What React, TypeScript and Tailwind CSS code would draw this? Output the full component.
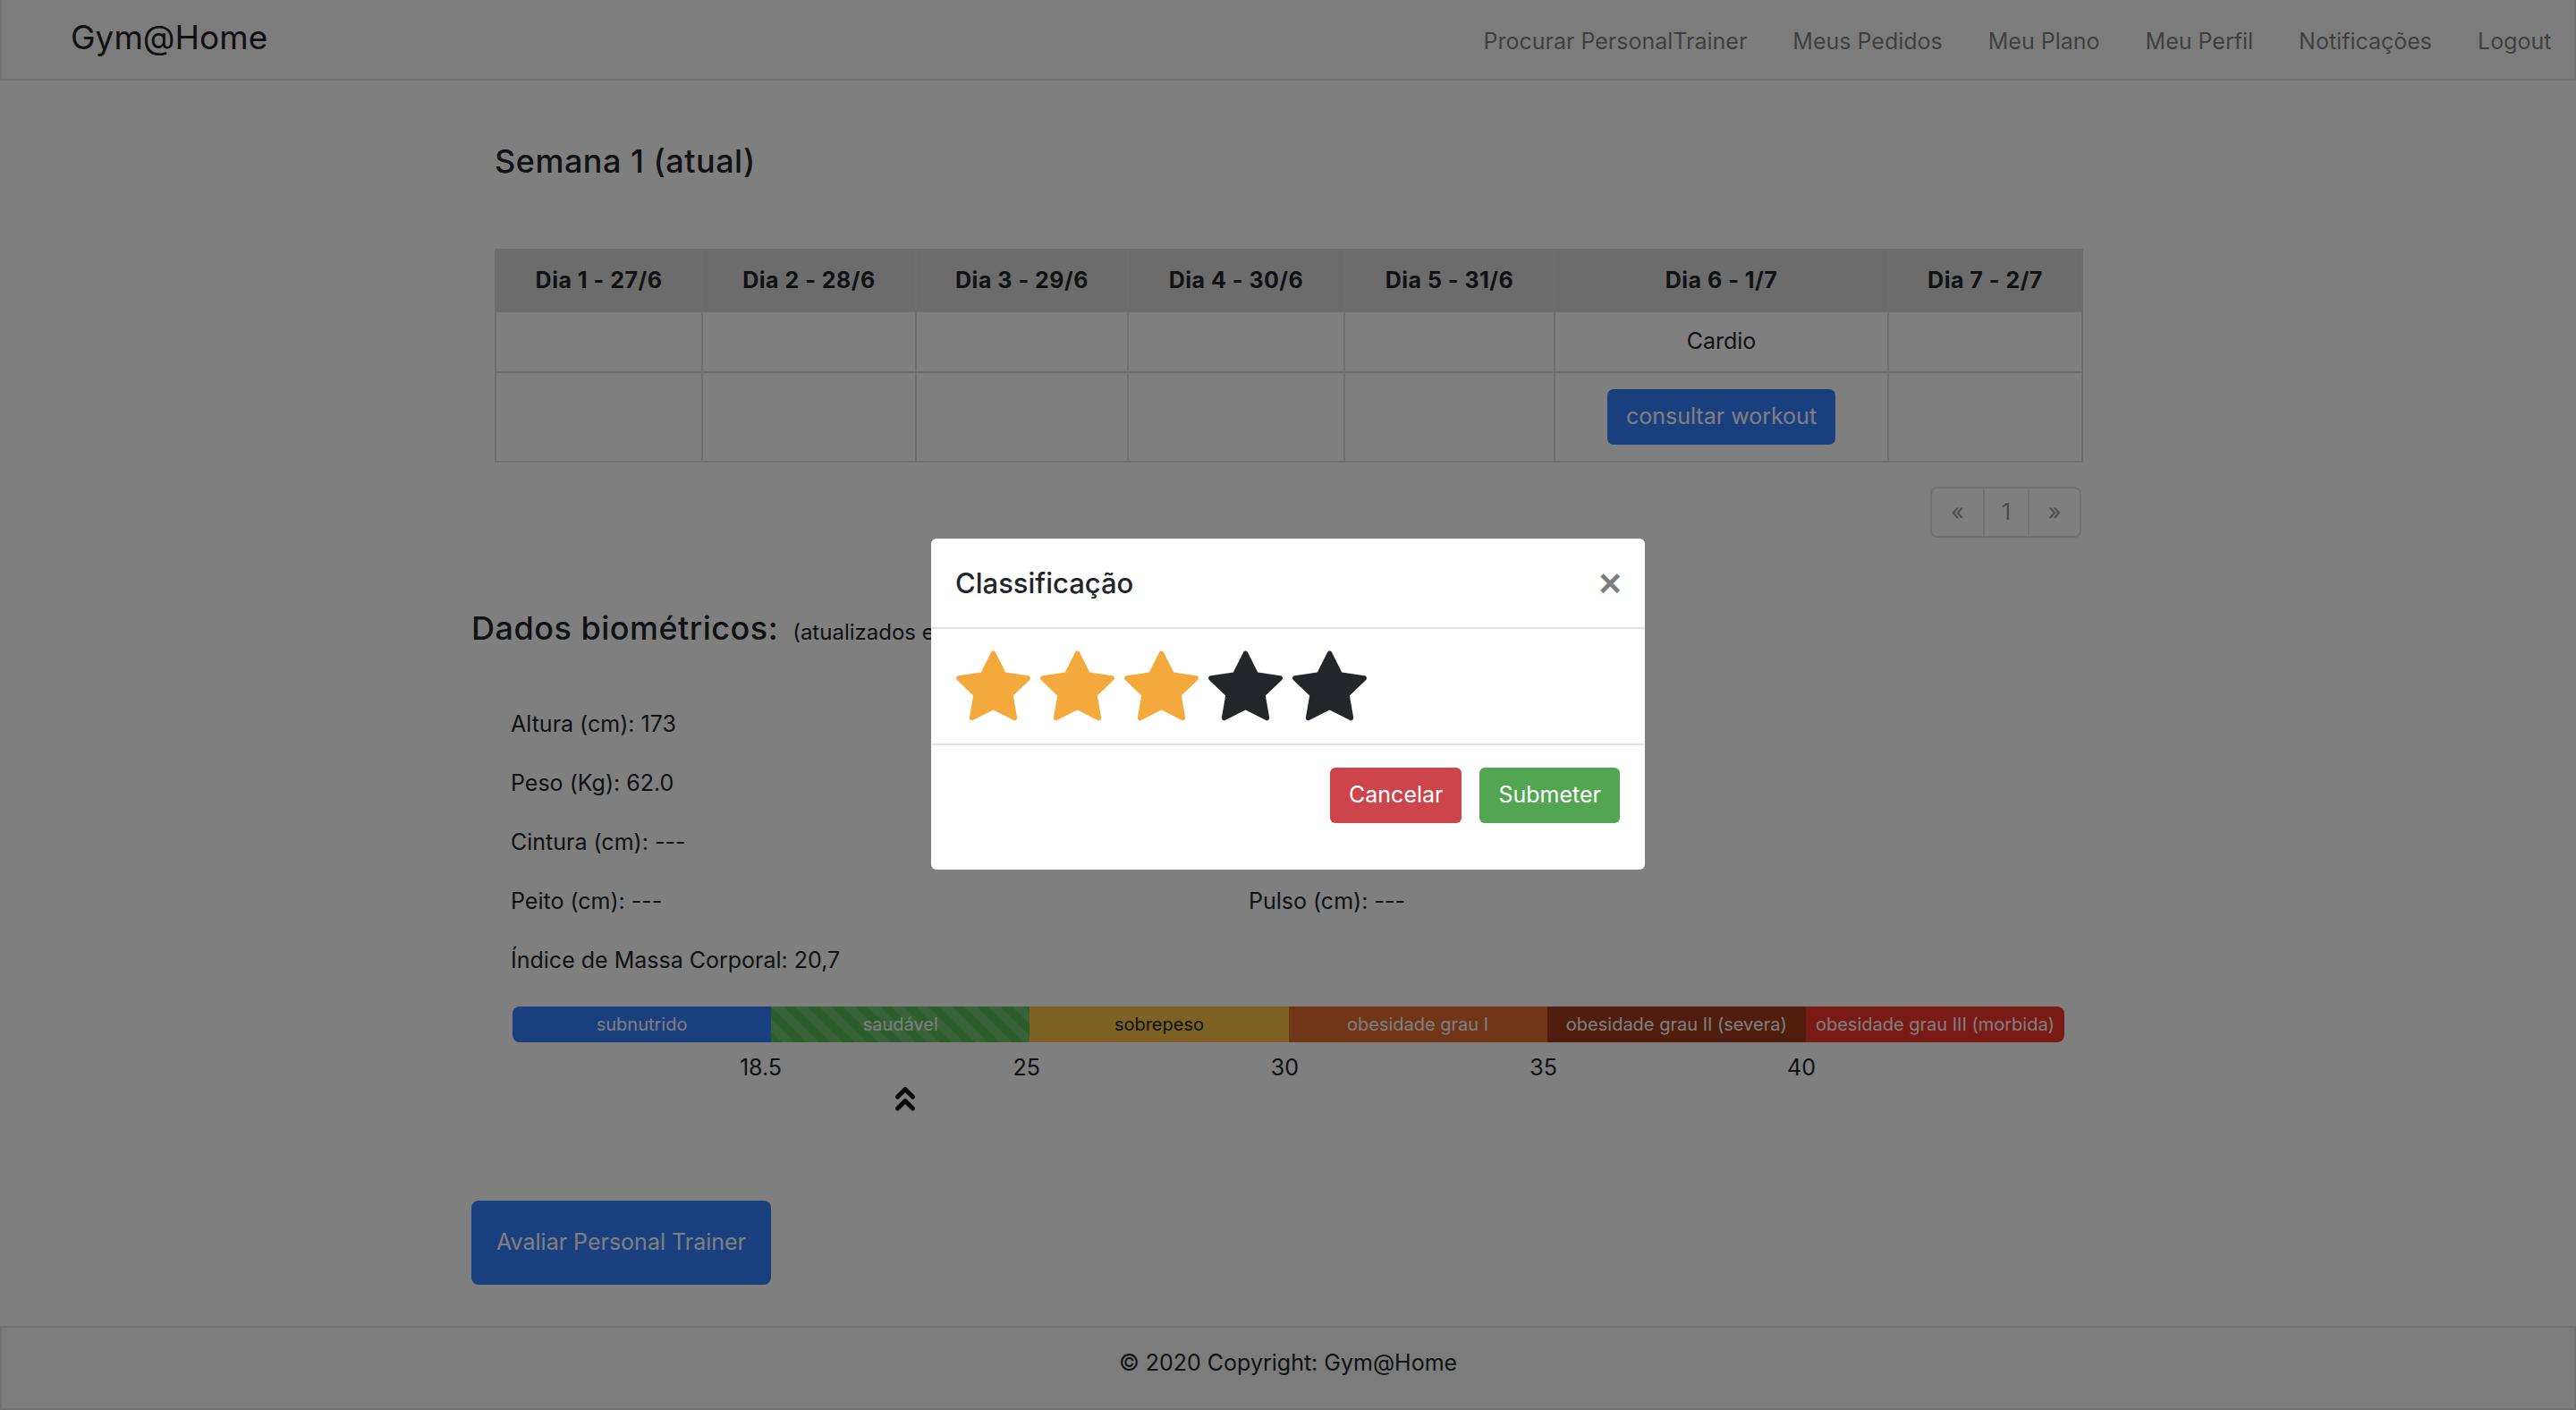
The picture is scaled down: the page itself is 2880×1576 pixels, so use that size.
import { BsStarFill } from "react-icons/bs";

const links = ["Procurar PersonalTrainer", "Meus Pedidos", "Meu Plano", "Meu Perfil", "Notificações", "Logout"];
const cols = [231, 239, 237, 242, 235, 373, 217];
const days = ["Dia 1 - 27/6", "Dia 2 - 28/6", "Dia 3 - 29/6", "Dia 4 - 30/6", "Dia 5 - 31/6", "Dia 6 - 1/7", "Dia 7 - 2/7"];

const bio: [string, string][] = [
  ["Altura (cm): 173", ""],
  ["Peso (Kg): 62.0", ""],
  ["Cintura (cm): ---", ""],
  ["Peito (cm): ---", "Pulso (cm): ---"],
];

const segments = [
  { label: "subnutrido", cls: "bg-[#327efc] text-white" },
  { label: "saudável", cls: "bg-[#58bc58] text-white striped" },
  { label: "sobrepeso", cls: "bg-[#fcc448] text-[#212529]" },
  { label: "obesidade grau I", cls: "bg-[#e06c2e] text-white" },
  { label: "obesidade grau II (severa)", cls: "bg-[#a03a1c] text-white" },
  { label: "obesidade grau III (morbida)", cls: "bg-[#f4342a] text-white" },
];

const ticks = ["18.5", "25", "30", "35", "40"];

export default function App() {
  return (
    <div className="relative min-h-screen bg-white font-['Inter',sans-serif] text-[#212529]">
      <nav className="flex h-[90px] items-center justify-between border-x-2 border-b-2 border-[#e0e0e0] bg-[#f8f9fa] pl-[77px]">
        <span className="mb-[6px] text-[37px] leading-none text-[#222]">Gym@Home</span>
        <ul className="mt-[4px] flex items-center">
          {links.map((l) => (
            <li key={l} className="px-[25.5px] text-[25px] leading-[30px] text-black/50">
              {l}
            </li>
          ))}
        </ul>
      </nav>

      <main className="ml-[527px] w-[1826px]">
        <section className="px-[26px] pt-[69px]">
          <h4 className="text-[36px] font-medium leading-[42px] tracking-[0.5px]">Semana 1 (atual)</h4>
          <table className="mt-[77px] w-full table-fixed border-collapse text-center text-[25px]">
            <colgroup>
              {cols.map((w, i) => (
                <col key={i} style={{ width: w }} />
              ))}
            </colgroup>
            <thead>
              <tr>
                {days.map((d) => (
                  <th key={d} className="h-[69px] border-2 border-[#dcdcdc] bg-[#d8d8d8] text-[25px] font-bold tracking-[0.5px]">
                    {d}
                  </th>
                ))}
              </tr>
            </thead>
            <tbody>
              <tr>
                {days.map((d, i) => (
                  <td key={d} className="h-[68px] border-2 border-[#dcdcdc]">
                    {i === 5 ? "Cardio" : ""}
                  </td>
                ))}
              </tr>
              <tr>
                {days.map((d, i) => (
                  <td key={d} className="h-[100px] border-2 border-[#dcdcdc]">
                    {i === 5 ? (
                      <button className="h-[62px] rounded-[7px] bg-[#347eff] px-[21px] text-[25px] text-white">
                        consultar workout
                      </button>
                    ) : null}
                  </td>
                ))}
              </tr>
            </tbody>
          </table>
          <div className="mt-[27px] flex justify-end">
            <div className="flex h-[57px] overflow-hidden rounded-[8px] border-2 border-[#dee2e6] text-[25px] text-[#999]">
              <span className="flex w-[57px] items-center justify-center">«</span>
              <span className="flex w-[52px] items-center justify-center border-x-2 border-[#dee2e6]">1</span>
              <span className="flex w-[56px] items-center justify-center">»</span>
            </div>
          </div>
        </section>

        <section className="mt-[80px]">
          <div className="flex items-baseline gap-[16px]">
            <h3 className="text-[36px] font-medium leading-[43px] tracking-[0.5px]">Dados biométricos:</h3>
            <span className="text-[24px]">(atualizados em 27/06/2020)</span>
          </div>
          <div className="mt-[69px] grid grid-cols-[825px_1fr] gap-y-[36px] pl-[44px] text-[25px] leading-[30px]">
            {bio.map(([a, b], i) => [
              <div key={`a${i}`}>{a}</div>,
              <div key={`b${i}`}>{b}</div>,
            ])}
            <div className="col-span-2">Índice de Massa Corporal: 20,7</div>
          </div>

          <div className="ml-[46px] mt-[37px] flex h-[40px] w-[1735px] overflow-hidden rounded-[8px] text-[20px]">
            {segments.map((s) => (
              <div
                key={s.label}
                className={`flex flex-1 items-center justify-center ${s.cls}`}
                style={
                  s.cls.includes("striped")
                    ? {
                        backgroundImage:
                          "linear-gradient(45deg, rgba(255,255,255,.15) 25%, transparent 25%, transparent 50%, rgba(255,255,255,.15) 50%, rgba(255,255,255,.15) 75%, transparent 75%, transparent)",
                        backgroundSize: "27px 27px",
                      }
                    : undefined
                }
              >
                {s.label}
              </div>
            ))}
          </div>
          <div className="ml-[58px] mt-[13px] flex text-[25px] leading-[30px]">
            {ticks.map((t) => (
              <div key={t} className="w-[289px] text-right">
                {t}
              </div>
            ))}
          </div>
          <div className="ml-[473px] mt-[5px]">
            <svg width="24" height="30" viewBox="0 0 24 30" fill="none" stroke="#111" strokeWidth="5" strokeLinecap="round" strokeLinejoin="round">
              <polyline points="3.5,13 12,4.5 20.5,13" />
              <polyline points="3.5,26 12,17.5 20.5,26" />
            </svg>
          </div>

          <button className="mt-[99px] h-[94px] rounded-[8px] bg-[#347eff] px-[28px] text-[25px] text-white">
            Avaliar Personal Trainer
          </button>
        </section>
      </main>

      <footer className="mt-[46px] flex h-[94px] items-center justify-center border-2 border-[#e0e0e0] bg-[#f8f9fa] pb-[10px] text-[25px]">
        © 2020 Copyright: Gym@Home
      </footer>

      <div className="fixed inset-0 flex justify-center bg-black/50">
        <div className="mt-[602px] h-fit w-[798px] rounded-[6px] bg-white">
          <div className="flex h-[101px] items-center justify-between border-b-2 border-[#dee2e6] pl-[27px] pr-[26px]">
            <h5 className="text-[31px] font-medium leading-[38px]">Classificação</h5>
            <span className="font-['Liberation_Sans',sans-serif] text-[44px] font-bold leading-none text-black/50">×</span>
          </div>
          <div className="flex gap-[11px] border-b-2 border-[#dee2e6] px-[28px] pb-[23px] pt-[22px]">
            {[0, 1, 2, 3, 4].map((i) => (
              <BsStarFill key={i} size={83} color={i < 3 ? "#f3a93c" : "#23272b"} />
            ))}
          </div>
          <div className="flex justify-end gap-[20px] pb-[52px] pr-[28px] pt-[25px]">
            <button className="h-[62px] rounded-[6px] bg-[#cd444b] px-[21px] text-[25px] text-white">Cancelar</button>
            <button className="h-[62px] rounded-[6px] bg-[#53a552] px-[21px] text-[25px] text-white">Submeter</button>
          </div>
        </div>
      </div>
    </div>
  );
}
